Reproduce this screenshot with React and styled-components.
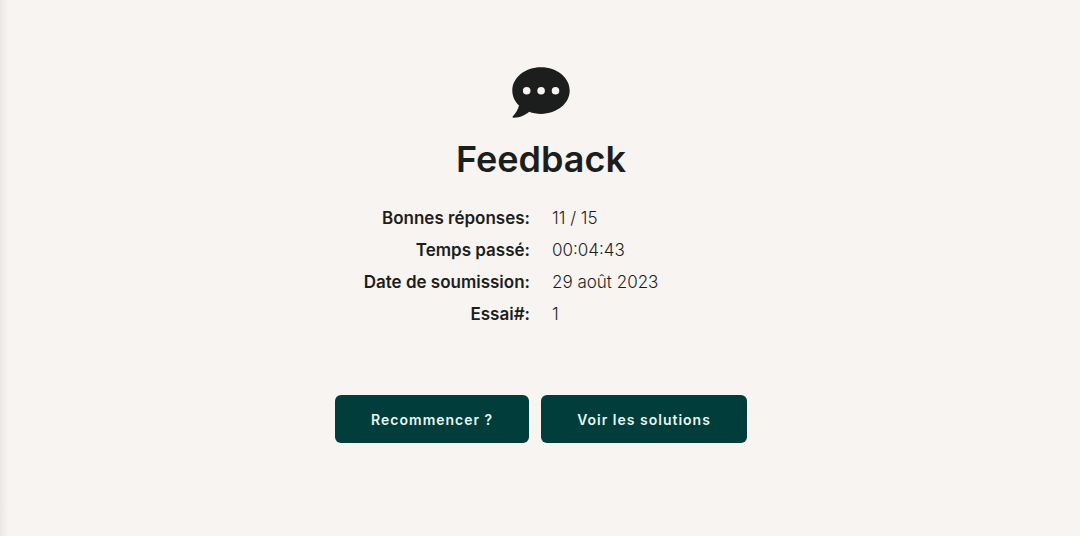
import React from 'react';
import styled, { createGlobalStyle } from 'styled-components';

const GlobalStyle = createGlobalStyle`
  * {
    box-sizing: border-box;
  }
  body {
    margin: 0;
    background: #f7f4f1;
    color: #1c1e1d;
    font-family: Inter, Roboto, sans-serif;
  }
`

const Page = styled.main`
  min-height: 100vh;
  padding: 67px 0 64px 2px;
  display: flex;
  flex-direction: column;
  align-items: center;
  background: linear-gradient(to right, #e9e6e4, #f7f4f1 8px);
`

const BubbleIcon = styled.svg`
  display: block;
  width: 58px;
  height: 51px;
  fill: #1c1e1d;
`

const Title = styled.h1`
  margin: 20px 0 0;
  font-size: 36px;
  line-height: 42px;
  font-weight: 600;
`

const Results = styled.dl`
  width: 100%;
  margin: 22px 0 0;
  display: grid;
  grid-template-columns: 1fr 1fr;
  column-gap: 22px;
  font-size: 17px;
  line-height: 32px;
`

const Label = styled.dt`
  text-align: right;
  font-weight: 600;
`

const Value = styled.dd`
  margin: 0;
  font-weight: 300;
`

const Actions = styled.div`
  margin-top: 65px;
  display: flex;
  gap: 12px;
`

const Button = styled.button`
  height: 48px;
  padding: 0 36px;
  border: 0;
  border-radius: 6px;
  background: #013d3b;
  color: #e6f7f2;
  font-family: inherit;
  font-size: 14px;
  font-weight: 600;
  letter-spacing: 1px;
  cursor: pointer;
`

const results = [
  { label: 'Bonnes réponses:', value: '11 / 15' },
  { label: 'Temps passé:', value: '00:04:43' },
  { label: 'Date de soumission:', value: '29 août 2023' },
  { label: 'Essai#:', value: '1' },
]

const FeedbackIcon = () => (
  <BubbleIcon viewBox="0 0 58 51" aria-hidden="true">
    <path
      fillRule="evenodd"
      d="M29 .3C44.900 .3 57.700 10.600 57.700 23.600S44.900 46.900 29 46.900C24.700 46.900 20.700 46.200 17.200 44.800C13.300 48.300 7.500 50.900 1.300 50.700C.4 50.600 .3 49.900 .9 49.200C3.900 46.200 6.200 42.400 7 38.600C2.800 34.600 .3 29.400 .3 23.600C.3 10.600 13.100 .3 29 .3ZM14.700 19.900a3.800 3.800 0 1 0 0 7.600a3.800 3.800 0 0 0 0-7.600ZM29.100 19.900a3.800 3.800 0 1 0 0 7.600a3.800 3.800 0 0 0 0-7.600ZM43.500 19.900a3.800 3.800 0 1 0 0 7.600a3.800 3.800 0 0 0 0-7.600Z"
    />
  </BubbleIcon>
)

const App = () => {
  return <>
    <GlobalStyle />
    <Page>
      <FeedbackIcon />
      <Title>Feedback</Title>
      <Results>
        {results.map(({ label, value }) => (
          <React.Fragment key={label}>
            <Label>{label}</Label>
            <Value>{value}</Value>
          </React.Fragment>
        ))}
      </Results>
      <Actions>
        <Button type="button">Recommencer ?</Button>
        <Button type="button">Voir les solutions</Button>
      </Actions>
    </Page>
  </>
}

export default App;
